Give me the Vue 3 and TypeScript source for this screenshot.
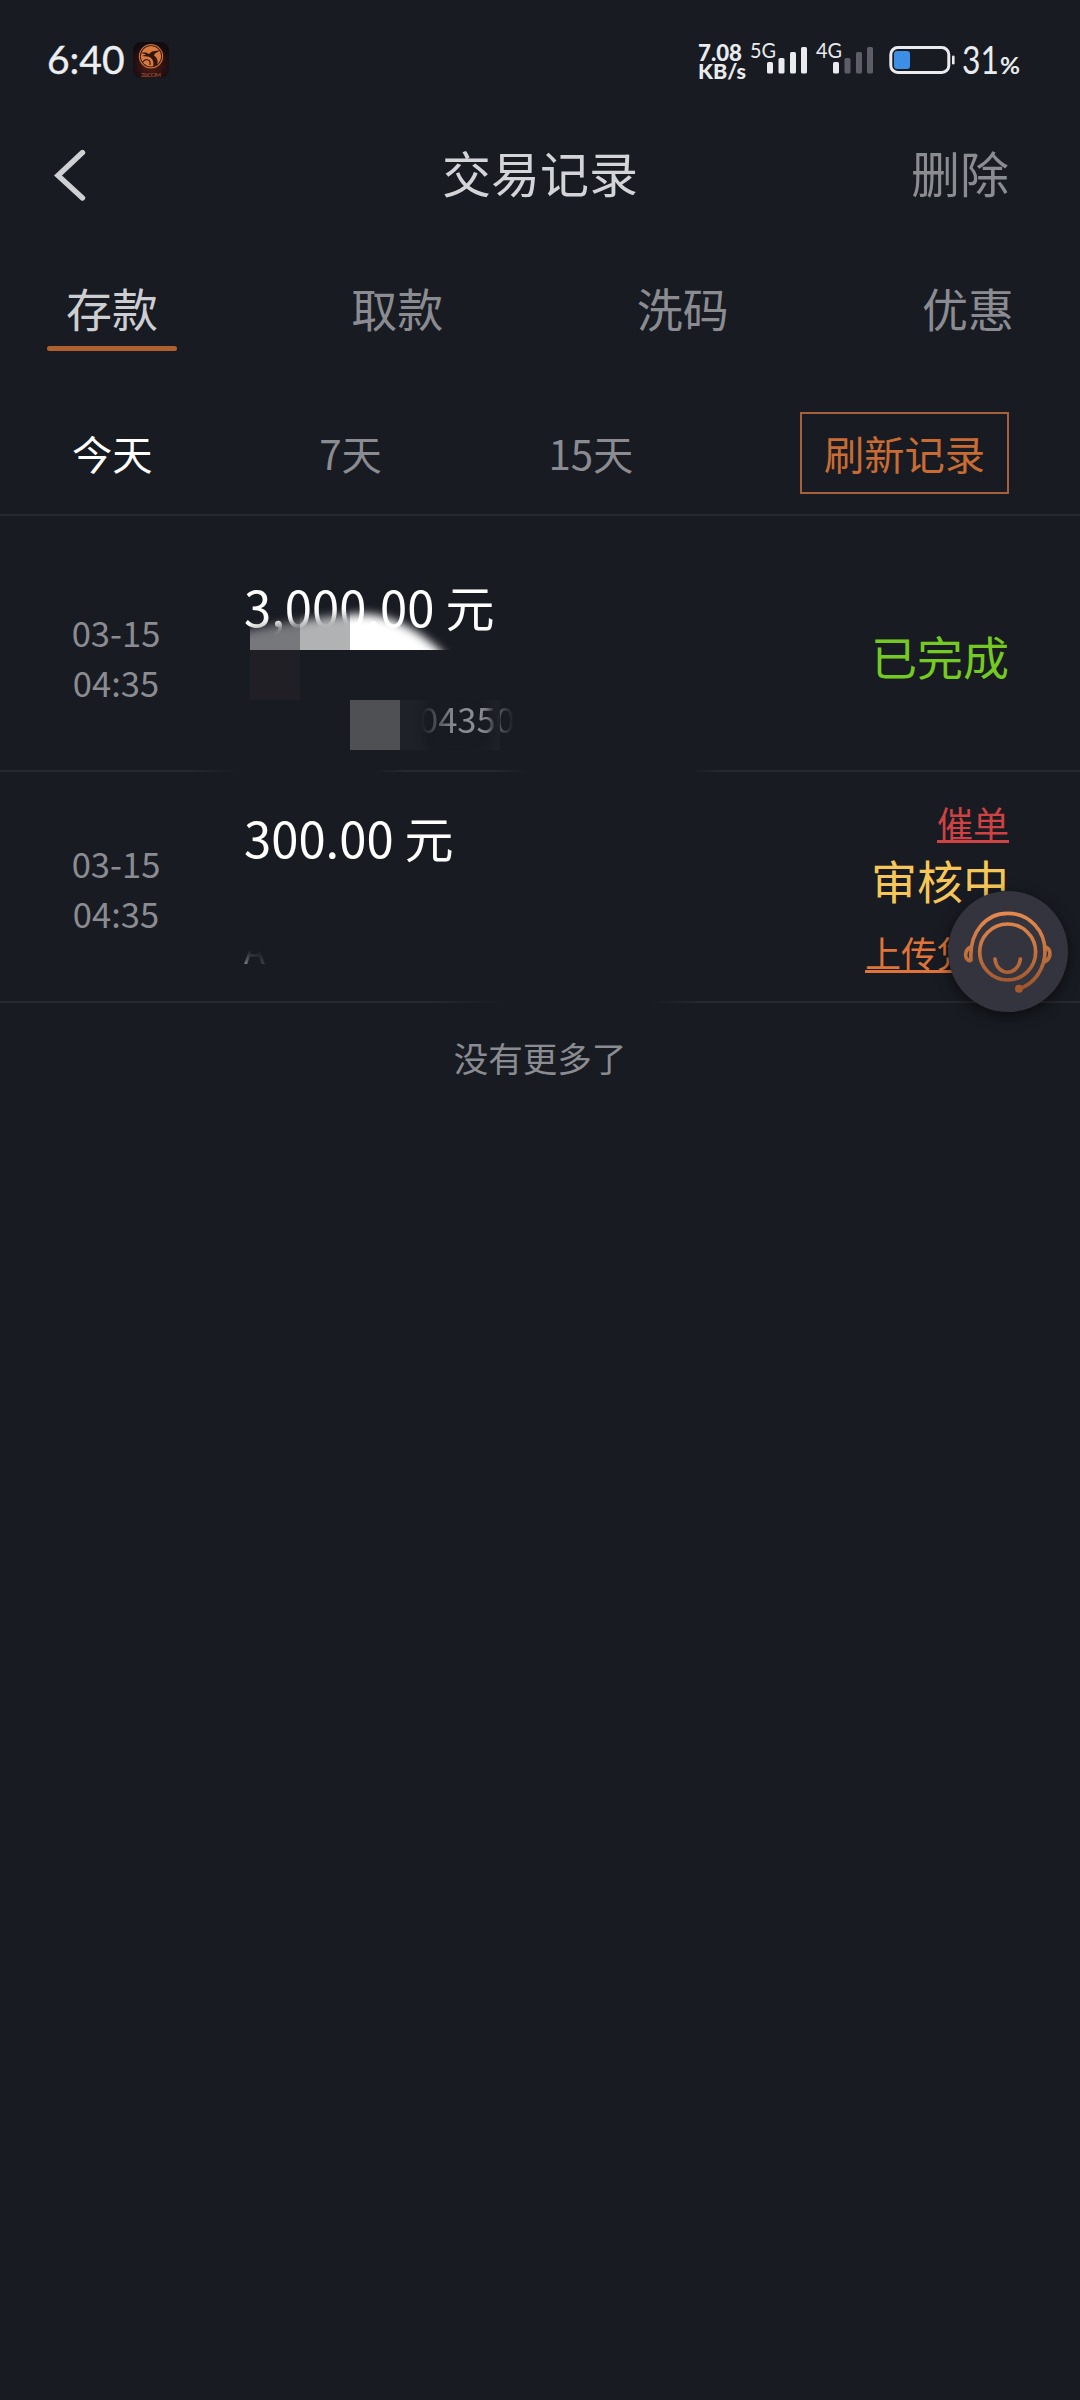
<script setup lang="ts">
interface Bar {
  x: number
  y: number
}

const tabs: string[] = ['存款', '取款', '洗码', '优惠']
const ranges: string[] = ['今天', '7天', '15天']
const activeTab = 0
const activeRange = 0

const bars: Bar[] = [
  { x: 17, y: 21 },
  { x: 28.5, y: 17 },
  { x: 40, y: 11 },
  { x: 51, y: 6 },
]
</script>

<template>
  <div class="screen">
    <div class="status-bar">
      <span class="clock">6:40</span>
      <svg class="app-badge" viewBox="0 0 36 36">
        <defs>
          <radialGradient id="badgeGlow" cx="50%" cy="62%" r="60%">
            <stop offset="0" stop-color="#5a1c0c" />
            <stop offset="0.6" stop-color="#2c1214" />
            <stop offset="1" stop-color="#120c10" />
          </radialGradient>
        </defs>
        <rect width="36" height="36" rx="8" fill="url(#badgeGlow)" />
        <circle cx="18" cy="14.3" r="11.6" fill="#2a120c" stroke="#c8703c" stroke-width="1.2" />
        <circle cx="18" cy="14.3" r="10.2" fill="#d97b40" />
        <path d="M7 10.5 L13 10.5 L16 12 L19 9.5 L28 8 L22 11.5 L21 13.5 C24.5 16 25.5 20 24 23 L20 24.5 C21.5 19.5 19 15 14 14.5 L9 14 L13 12.5 Z" fill="#34150d" />
        <path d="M10 20 C12 16 18 17 17 23" fill="none" stroke="#34150d" stroke-width="1.2" />
        <text x="8" y="34.5" font-size="6.5" textLength="20" class="badge-label">Z6.COM</text>
      </svg>
      <div class="status-spacer"></div>
      <svg class="net" viewBox="0 0 50 40">
        <text x="0" y="20" font-size="22.5" textLength="44" lengthAdjust="spacingAndGlyphs">7.08</text>
        <text x="0" y="38" font-size="20.5" textLength="48" lengthAdjust="spacingAndGlyphs">KB/s</text>
      </svg>
      <svg class="signal" viewBox="0 0 60 40">
        <text x="0" y="17.2" font-size="20.5" textLength="26" lengthAdjust="spacingAndGlyphs">5G</text>
        <rect v-for="b in bars" :key="b.x" :x="b.x" :y="b.y" width="6" :height="32.5 - b.y" rx="1.5" />
      </svg>
      <svg class="signal second" viewBox="0 0 60 40">
        <text x="0" y="17.2" font-size="20.5" textLength="26" lengthAdjust="spacingAndGlyphs">4G</text>
        <rect
          v-for="(b, i) in bars"
          :key="b.x"
          :x="b.x"
          :y="b.y"
          width="6"
          :height="32.5 - b.y"
          rx="1.5"
          :class="{ off: i > 0 }"
        />
      </svg>
      <svg class="battery" viewBox="0 0 68 30">
        <rect x="1.8" y="2.6" width="58" height="24.8" rx="7" fill="none" stroke="#e9ebee" stroke-width="3" />
        <rect x="5" y="6" width="16" height="18" rx="3" fill="#3d8fe6" />
        <rect x="63" y="10.5" width="2.6" height="9" rx="1.3" fill="#e9ebee" />
      </svg>
      <svg class="level" viewBox="0 0 60 40">
        <text x="-1" y="33" font-size="38" textLength="37" lengthAdjust="spacingAndGlyphs">31</text>
        <text x="37" y="33" font-size="22" font-weight="700" textLength="20" lengthAdjust="spacingAndGlyphs">%</text>
      </svg>
    </div>

    <header class="nav">
      <svg class="back" viewBox="0 0 34 54">
        <path d="M29.5 4.5 L5 27.5 L29.5 50" fill="none" stroke="#cfd0d4" stroke-width="5.4" stroke-linecap="round" />
      </svg>
      <h1>交易记录</h1>
      <span class="delete">删除</span>
    </header>

    <nav class="tabs">
      <div v-for="(t, i) in tabs" :key="t" class="tab" :class="{ active: i === activeTab }">{{ t }}</div>
    </nav>

    <div class="filters">
      <span v-for="(r, i) in ranges" :key="r" class="range" :class="{ active: i === activeRange }">{{ r }}</span>
      <button class="refresh">刷新记录</button>
    </div>

    <section class="record first">
      <div class="time"><span>03-15</span><span>04:35</span></div>
      <div class="main">
        <div class="amount">3,000.00 元</div>
        <div class="serial tail">04350</div>
      </div>
      <div class="state"><span class="done">已完成</span></div>
      <svg class="redact" viewBox="0 516 1080 256">
        <defs>
          <filter id="soft" x="-20%" y="-50%" width="140%" height="200%">
            <feGaussianBlur stdDeviation="5" />
          </filter>
          <mask id="smear" maskUnits="userSpaceOnUse" x="200" y="580" width="300" height="120">
            <path
              d="M200 700 V640 C240 634 262 626 300 621 C325 617 345 614 368 614 C395 617 418 630 442 652 L460 700 Z"
              fill="#fff"
              filter="url(#soft)"
            />
          </mask>
          <mask id="window" maskUnits="userSpaceOnUse" x="390" y="690" width="120" height="70">
            <rect x="390" y="690" width="120" height="70" fill="#fff" />
            <rect x="422" y="690" width="70" height="70" rx="26" fill="#000" filter="url(#soft)" />
          </mask>
        </defs>
        <g mask="url(#smear)">
          <rect x="250" y="590" width="50" height="60" fill="#77787c" />
          <rect x="300" y="590" width="50" height="60" fill="#b1b2b4" />
          <rect x="350" y="590" width="110" height="60" fill="#ffffff" />
        </g>
        <rect x="250" y="650" width="50" height="50" fill="#211f26" />
        <rect x="350" y="700" width="50" height="50" fill="#4f5054" />
        <rect x="400" y="700" width="100" height="50" fill="#1e2128" mask="url(#window)" />
      </svg>
    </section>

    <section class="record second">
      <div class="time"><span>03-15</span><span>04:35</span></div>
      <div class="main">
        <div class="amount">300.00 元</div>
        <div class="serial head">A</div>
      </div>
      <div class="state">
        <a class="urge">催单</a>
        <span class="pending">审核中</span>
        <a class="upload">上传凭证</a>
      </div>
      <div class="service">
        <svg viewBox="384 334 360 360">
          <defs>
            <linearGradient id="copper" gradientUnits="userSpaceOnUse" x1="0" y1="395" x2="0" y2="640">
              <stop offset="0" stop-color="#e98a4e" />
              <stop offset="0.45" stop-color="#c87541" />
              <stop offset="1" stop-color="#96512a" />
            </linearGradient>
          </defs>
          <g fill="none" stroke="url(#copper)" stroke-width="11" stroke-linecap="round">
            <circle cx="563" cy="517" r="84" />
            <path d="M453 541 C447 455 500 401 563 401 C630 401 675 455 675 515 C675 570 640 613 600 626" />
            <path d="M453 502 C433 510 431 540 450 543" />
            <path d="M676 502 C695 510 695 536 673 547" />
            <path d="M525 538 C531 591 594 591 601 538" />
          </g>
          <circle cx="597" cy="627" r="12" fill="#a65a2c" />
        </svg>
      </div>
    </section>

    <p class="end">没有更多了</p>
  </div>
</template>

<style>
body {
  background: #181b22;
}
</style>

<style scoped>
.screen {
  width: 1080px;
  height: 2400px;
  overflow: hidden;
  background: #181b22;
  color: #8b8c91;
  font-family: 'Noto Sans CJK SC', sans-serif;
}

.status-bar {
  display: flex;
  align-items: flex-start;
  box-sizing: border-box;
  height: 108px;
  padding: 41px 57px 0 47px;
  font-family: Lato, sans-serif;
}
.status-bar svg {
  display: block;
  flex: none;
  fill: #e9ebee;
  overflow: visible;
}
.status-bar .badge-label { fill: #a5563a; }
.clock {
  width: 86px;
  font-size: 39px;
  line-height: 37px;
  color: #eceef0;
  -webkit-text-stroke: 0.4px #eceef0;
}
.app-badge { width: 36px; height: 36px; margin-top: 1px; }
.status-spacer { flex: 1; }
.net { width: 50px; height: 40px; font-weight: 900; }
.signal { width: 60px; height: 40px; margin-left: 2px; }
.signal.second { margin-left: 6px; }
.signal .off { fill: #5c5d66; }
.battery { width: 68px; height: 30px; margin: 4px 0 0 13px; }
.level { width: 60px; height: 40px; margin-left: 6px; }

.nav {
  display: flex;
  justify-content: space-between;
  align-items: center;
  height: 127px;
  padding: 0 71px 0 53px;
  font-size: 49px;
}
.back { width: 34px; height: 54px; margin: 7px 82px 0 0; }
.nav h1 {
  margin: 0;
  font-size: 49px;
  font-weight: 400;
  line-height: 70px;
  color: #d3d4d8;
}
.delete { line-height: 70px; }

.tabs {
  display: flex;
  justify-content: space-between;
  padding: 37px 47px 0;
}
.tab {
  width: 130px;
  height: 79px;
  font-size: 46px;
  line-height: 70px;
  text-align: center;
}
.tab.active { color: #cdced2; }
.tab.active::after {
  content: '';
  display: block;
  height: 5px;
  margin-top: 4px;
  border-radius: 3px;
  background: #b0602f;
}

.filters {
  display: flex;
  justify-content: space-between;
  align-items: center;
  box-sizing: border-box;
  height: 165px;
  padding: 41px 71px 0 72px;
  border-bottom: 2px solid #262931;
  font-size: 40.3px;
}
.range { line-height: 60px; }
.range.active { color: #fff; }
.refresh {
  box-sizing: border-box;
  width: 209px;
  height: 82px;
  padding: 0;
  border: 2px solid #a8603a;
  background: none;
  color: #c86c34;
  font: inherit;
  line-height: 76px;
}

.record {
  position: relative;
  display: flex;
  box-sizing: border-box;
  height: 231px;
  padding-right: 71px;
}
.record::after {
  content: '';
  position: absolute;
  left: 0;
  right: 0;
  bottom: 0;
  height: 2px;
}
.record.first { height: 256px; padding-top: 25px; }
.record.first::after {
  background: linear-gradient(90deg, #262931 190px, transparent 240px, transparent 375px, #262931 405px, #262931 495px, transparent 526px, transparent 690px, #262931 718px);
}
.record.second::after {
  background: linear-gradient(90deg, #262931 430px, transparent 505px, transparent 650px, #262931 700px);
}
.time {
  display: flex;
  flex-direction: column;
  justify-content: center;
  width: 232px;
  margin-right: 12px;
  font-size: 34.56px;
  line-height: 50px;
  text-align: center;
}
.main { flex: 1; padding-top: 30px; }
.amount {
  font-size: 49px;
  line-height: 70px;
  color: #fff;
}
.serial {
  width: 300px;
  margin-top: 52px;
  font-size: 34.56px;
  line-height: 50px;
}
.tail {
  box-sizing: border-box;
  padding-left: 175px;
  mask-image: linear-gradient(90deg, transparent 176px, #000 210px, #000 243px, transparent 270px);
}
.head {
  mask-image: linear-gradient(100deg, #000 6px, rgba(0, 0, 0, 0.35) 22px), linear-gradient(180deg, transparent 26px, #000 42px);
  mask-composite: intersect;
}
.state {
  display: flex;
  flex-direction: column;
  align-items: flex-end;
  font-size: 46px;
  line-height: 50px;
}
.first .state { justify-content: center; padding-bottom: 3px; }
.second .state { padding-top: 30px; }
.done { color: #74c922; }
.pending { margin: 12px 0 28px; color: #f6c658; }
.urge,
.upload {
  font-size: 36px;
  line-height: 40px;
  text-decoration: underline;
  text-decoration-thickness: 3px;
  text-underline-offset: 2px;
  text-decoration-skip-ink: none;
}
.urge { color: #cf4244; }
.upload { color: #df743a; }

.redact {
  position: absolute;
  inset: 0;
  width: 1080px;
  height: 256px;
}

.service {
  position: absolute;
  z-index: 1;
  right: 12px;
  top: 119px;
  width: 120px;
  height: 121px;
  border-radius: 50%;
  background: #33343e;
  box-shadow: 0 4px 14px rgba(0, 0, 0, 0.55);
}
.service svg { display: block; width: 120px; height: 120px; }

.end {
  margin: 29px 0 0;
  font-size: 34.56px;
  line-height: 50px;
  text-align: center;
}
</style>
